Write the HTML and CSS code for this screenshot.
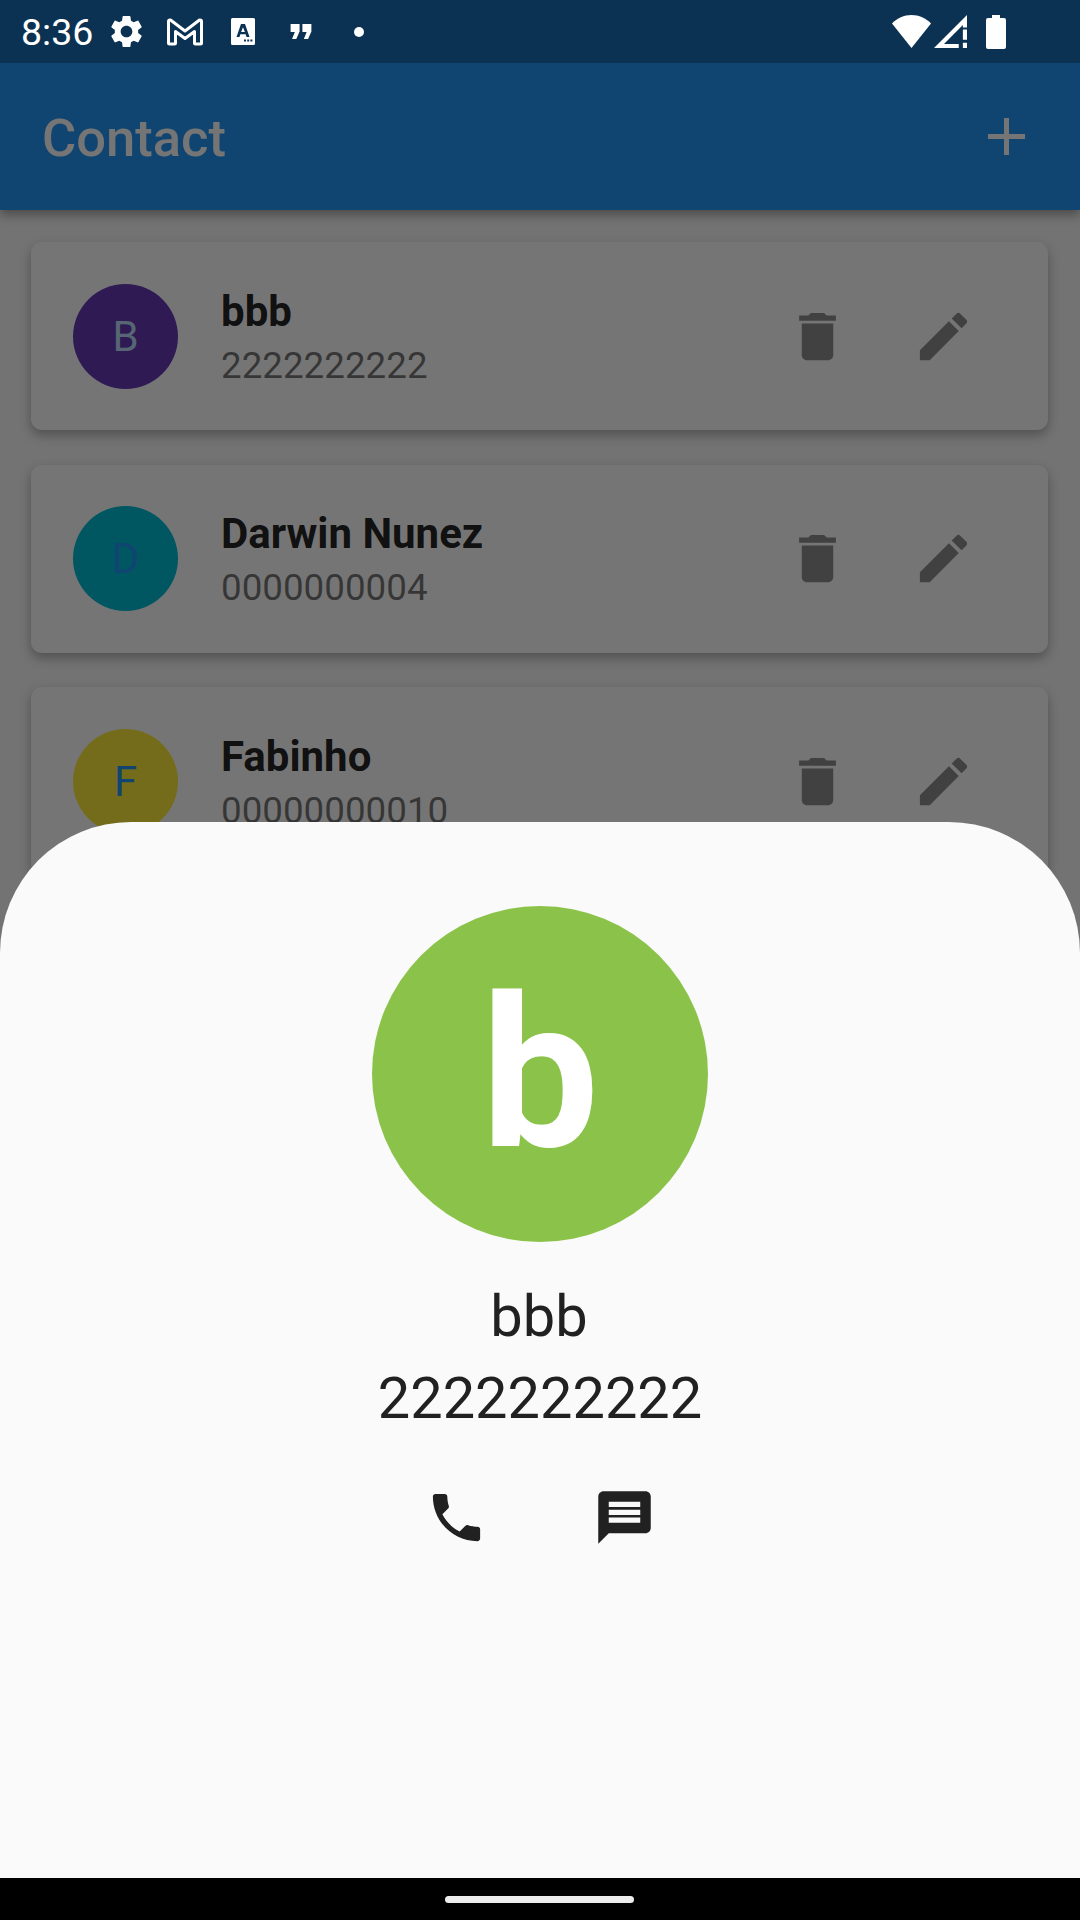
FILE: index.html
```html
<!DOCTYPE html>
<html lang="en">
<head>
  <meta charset="UTF-8">
  <meta name="viewport" content="width=device-width, initial-scale=1.0">
  <title>Contact</title>
  <link rel="stylesheet" href="styles.css">
</head>
<body>
  <div class="screen">
    <div class="status-bar">
      <div class="status-left">
        <span class="time">8:36</span>
        <svg class="ic-gear" viewBox="0 0 24 24"><path d="M19.14 12.94c.04-.3.06-.61.06-.94 0-.32-.02-.64-.07-.94l2.03-1.58c.18-.14.23-.41.12-.61l-1.92-3.32c-.12-.22-.37-.29-.59-.22l-2.39.96c-.5-.38-1.03-.7-1.62-.94l-.36-2.54c-.04-.24-.24-.41-.48-.41h-3.84c-.24 0-.43.17-.47.41l-.36 2.54c-.59.24-1.13.57-1.62.94l-2.39-.96c-.22-.08-.47 0-.59.22L2.74 8.87c-.12.21-.08.47.12.61l2.03 1.58c-.05.3-.09.63-.09.94s.02.64.07.94l-2.03 1.58c-.18.14-.23.41-.12.61l1.92 3.32c.12.22.37.29.59.22l2.39-.96c.5.38 1.03.7 1.62.94l.36 2.54c.05.24.24.41.48.41h3.84c.24 0 .44-.17.47-.41l.36-2.54c.59-.24 1.13-.56 1.62-.94l2.39.96c.22.08.47 0 .59-.22l1.92-3.32c.12-.22.07-.47-.12-.61l-2.01-1.58zM12 15.6c-1.98 0-3.6-1.62-3.6-3.6s1.62-3.6 3.6-3.6 3.6 1.62 3.6 3.6-1.62 3.6-3.6 3.6z"/></svg>
        <svg class="ic-mail" viewBox="0 0 36 28"><path d="M3.500 2 18 13 32.500 2H33a1.500 1.500 0 0 1 1.500 1.500V25a1 1 0 0 1-1 1h-5a1 1 0 0 1-1-1V13.500L18 20.500 8.500 13.500V25a1 1 0 0 1-1 1h-5a1 1 0 0 1-1-1V3.500A1.500 1.500 0 0 1 3 2z" fill="none" stroke="#fff" stroke-width="3" stroke-linejoin="round"/></svg>
        <svg class="ic-dict" viewBox="0 0 24 27"><path fill-rule="evenodd" d="M1.500 0h21A1.500 1.500 0 0 1 24 1.500v24a1.500 1.500 0 0 1-1.500 1.500h-21A1.500 1.500 0 0 1 0 25.500v-24A1.500 1.500 0 0 1 1.500 0zM10 6 5.500 19h3l.8-2.700h5.400l.8 2.700h3L14 6zm2 3.200 1.900 4.800h-3.800zM13 21.500h2v2h-2zm3.200 0h2v2h-2zm3.200 0h2v2h-2z"/></svg>
        <svg class="ic-quote" viewBox="0 0 24 18"><path d="M1 1h9.500v8L7 17H2.500L5.500 9.500H1zM13.500 1H23v8l-3.500 8H15l3-7.500h-4.500z"/></svg>
        <span class="dot"></span>
      </div>
      <div class="status-right">
        <svg class="ic-wifi" viewBox="0 0 39 33"><path d="M0 8.500C5 3.200 12 0 19.500 0S34 3.200 39 8.500L19.500 33z"/></svg>
        <svg class="ic-signal" viewBox="0 0 32 32"><path d="M32 0 0 32h24v-4H9.700L28 9.700V12h4zM28 14h4v10h-4zM28 27h4v5h-4z"/></svg>
        <svg class="ic-battery" viewBox="0 0 20 34"><path d="M6 0h8v3h4a2 2 0 0 1 2 2v27a2 2 0 0 1-2 2H2a2 2 0 0 1-2-2V5a2 2 0 0 1 2-2h4z"/></svg>
      </div>
    </div>

    <div class="app-bar">
      <span class="app-title">Contact</span>
      <svg class="ic-add" viewBox="0 0 37 37"><path d="M16 0h5v16h16v5H21v16h-5V21H0v-5h16z"/></svg>
    </div>

    <div class="list">
      <div class="card">
        <div class="avatar purple">B</div>
        <div class="info">
          <div class="name">bbb</div>
          <div class="phone">2222222222</div>
        </div>
        <svg class="ic-action" viewBox="0 0 24 24"><path d="M6 19c0 1.100.9 2 2 2h8c1.100 0 2-.9 2-2V7H6v12zM19 4h-3.500l-1-1h-5l-1 1H5v2h14V4z"/></svg>
        <svg class="ic-action" viewBox="0 0 24 24"><path d="M3 17.250V21h3.750L17.810 9.940l-3.750-3.750L3 17.250zM20.710 7.040c.39-.39.39-1.020 0-1.410l-2.340-2.340c-.39-.39-1.020-.39-1.410 0l-1.830 1.830 3.750 3.750 1.830-1.830z"/></svg>
      </div>
      <div class="card">
        <div class="avatar cyan">D</div>
        <div class="info">
          <div class="name">Darwin Nunez</div>
          <div class="phone">0000000004</div>
        </div>
        <svg class="ic-action" viewBox="0 0 24 24"><path d="M6 19c0 1.100.9 2 2 2h8c1.100 0 2-.9 2-2V7H6v12zM19 4h-3.500l-1-1h-5l-1 1H5v2h14V4z"/></svg>
        <svg class="ic-action" viewBox="0 0 24 24"><path d="M3 17.250V21h3.750L17.810 9.940l-3.750-3.750L3 17.250zM20.710 7.040c.39-.39.39-1.020 0-1.410l-2.340-2.340c-.39-.39-1.020-.39-1.410 0l-1.830 1.830 3.750 3.750 1.830-1.830z"/></svg>
      </div>
      <div class="card">
        <div class="avatar yellow">F</div>
        <div class="info">
          <div class="name">Fabinho</div>
          <div class="phone">00000000010</div>
        </div>
        <svg class="ic-action" viewBox="0 0 24 24"><path d="M6 19c0 1.100.9 2 2 2h8c1.100 0 2-.9 2-2V7H6v12zM19 4h-3.500l-1-1h-5l-1 1H5v2h14V4z"/></svg>
        <svg class="ic-action" viewBox="0 0 24 24"><path d="M3 17.250V21h3.750L17.810 9.940l-3.750-3.750L3 17.250zM20.710 7.040c.39-.39.39-1.020 0-1.410l-2.340-2.340c-.39-.39-1.020-.39-1.410 0l-1.830 1.830 3.750 3.750 1.830-1.830z"/></svg>
      </div>
    </div>

    <div class="scrim"></div>

    <div class="sheet">
      <div class="big-avatar">b</div>
      <div class="sheet-name">bbb</div>
      <div class="sheet-phone">2222222222</div>
      <div class="sheet-actions">
        <svg class="ic-sheet" viewBox="0 0 24 24"><path d="M6.620 10.790c1.440 2.830 3.760 5.140 6.590 6.590l2.200-2.200c.27-.27.67-.36 1.020-.24 1.120.37 2.330.57 3.570.57.55 0 1 .45 1 1V20c0 .55-.45 1-1 1-9.390 0-17-7.610-17-17 0-.55.45-1 1-1h3.500c.55 0 1 .45 1 1 0 1.250.2 2.450.57 3.570.11.35.03.74-.25 1.020l-2.200 2.200z"/></svg>
        <svg class="ic-sheet" viewBox="0 0 24 24"><path d="M20 2H4c-1.100 0-1.990.9-1.990 2L2 22l4-4h14c1.100 0 2-.9 2-2V4c0-1.100-.9-2-2-2zm-2 12H6v-2h12v2zm0-3H6V9h12v2zm0-3H6V6h12v2z"/></svg>
      </div>
    </div>

    <div class="nav-bar"><span class="nav-pill"></span></div>
  </div>
</body>
</html>
```

FILE: styles.css
```css
* {
  box-sizing: border-box;
}
body {
  margin: 0;
  font-family: Roboto, "Noto Sans", sans-serif;
}
.screen {
  position: relative;
  width: 1080px;
  height: 1920px;
  overflow: hidden;
  background: #fafafa;
}

/* status bar stays above the scrim */
.status-bar {
  position: relative;
  z-index: 3;
  height: 63px;
  background: #0b3252;
  display: flex;
  justify-content: space-between;
  align-items: center;
  color: #fff;
  fill: #fff;
}
.status-left {
  display: flex;
  align-items: center;
  padding-left: 21px;
}
.status-right {
  display: flex;
  align-items: center;
  padding-right: 74px;
}
.time {
  font-size: 37.500px;
  width: 86px;
}
.ic-gear { width: 39px; height: 39px; }
.ic-mail { width: 36px; height: 28px; margin-left: 21px; }
.ic-dict { width: 24px; height: 27px; margin-left: 28px; }
.ic-quote { width: 24px; height: 17px; margin-left: 34px; }
.dot {
  width: 10px;
  height: 10px;
  border-radius: 50%;
  background: #fff;
  margin-left: 41px;
}
.ic-wifi { width: 39px; height: 33px; }
.ic-signal { width: 33px; height: 33px; margin-left: 3px; }
.ic-battery { width: 20px; height: 34px; margin-left: 19px; }

.app-bar {
  height: 147px;
  background: #2196f3;
  display: flex;
  justify-content: space-between;
  align-items: center;
  padding: 2px 55px 0 42px;
  box-shadow: 0 5px 10px rgba(0, 0, 0, 0.35);
  position: relative;
  color: #fff;
  fill: #fff;
}
.app-title {
  font-size: 52.500px;
  font-weight: 500;
}
.ic-add { width: 37px; height: 37px; margin-top: -2px; }

.list {
  padding: 32px 32px 0 31px;
  display: flex;
  flex-direction: column;
  gap: 34.500px;
}
.card {
  height: 188px;
  flex: none;
  background: #fff;
  border-radius: 11px;
  box-shadow: 0 5px 12px rgba(0, 0, 0, 0.3);
  display: flex;
  align-items: center;
  padding: 0 73px 0 42px;
}
.avatar {
  width: 105px;
  height: 105px;
  flex: none;
  border-radius: 50%;
  display: flex;
  align-items: center;
  justify-content: center;
  font-size: 42px;
  color: #2196f3;
}
.avatar.purple { background: #673ab7; color: #bbdefb; }
.avatar.cyan { background: #00bcd4; }
.avatar.yellow { background: #ffeb3b; }
.info {
  flex: 1;
  padding: 3px 0 0 43px;
}
.name {
  font-size: 42px;
  font-weight: 700;
  color: rgba(0, 0, 0, 0.87);
  line-height: 46px;
}
.phone {
  font-size: 36.750px;
  color: rgba(0, 0, 0, 0.54);
  line-height: 43px;
  margin-top: 9px;
}
.ic-action {
  width: 63px;
  height: 63px;
  flex: none;
  margin-left: 63px;
  fill: #8e8e8e;
}
.ic-action:first-of-type {
  margin-left: 0;
}

.scrim {
  position: absolute;
  inset: 0;
  z-index: 1;
  background: rgba(0, 0, 0, 0.54);
}
.sheet {
  position: absolute;
  z-index: 2;
  left: 0;
  right: 0;
  top: 822px;
  bottom: 42px;
  background: #fafafa;
  border-radius: 131px 131px 0 0;
  display: flex;
  flex-direction: column;
  align-items: center;
  padding-top: 84px;
  color: #212121;
}
.big-avatar {
  width: 336px;
  height: 336px;
  border-radius: 50%;
  background: #8bc34a;
  color: #fff;
  font-size: 210px;
  font-weight: 700;
  display: flex;
  align-items: center;
  justify-content: center;
}
.sheet-name {
  font-size: 57.750px;
  line-height: 68px;
  margin-top: 40px;
  margin-right: 2px;
}
.sheet-phone {
  font-size: 57.750px;
  line-height: 68px;
  margin-top: 14px;
}
.sheet-actions {
  display: flex;
  gap: 105px;
  margin-top: 54px;
  fill: #212121;
}
.ic-sheet {
  width: 63px;
  height: 63px;
}

.nav-bar {
  position: absolute;
  z-index: 3;
  left: 0;
  right: 0;
  bottom: 0;
  height: 42px;
  background: #000;
  display: flex;
  justify-content: center;
  align-items: center;
  padding-right: 1px;
}
.nav-pill {
  width: 189px;
  height: 7px;
  border-radius: 4px;
  background: #ececec;
}
```
